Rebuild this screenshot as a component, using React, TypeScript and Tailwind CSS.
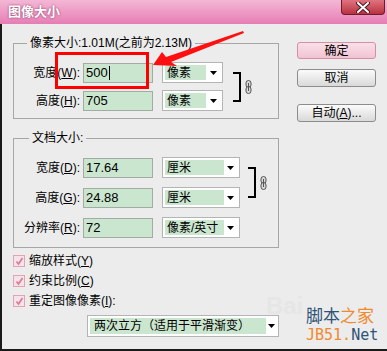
import React from 'react';

const FONT = "font-['Liberation_Sans','Noto_Sans_CJK_SC',sans-serif]";

const Chain: React.FC = () => (
  <svg width="7" height="14" viewBox="0 0 7 14" className="shrink-0">
    <rect x="1" y="0.5" width="5" height="7" rx="2.5" fill="#d8d8d8" stroke="#555" strokeWidth="1" />
    <rect x="1" y="6.5" width="5" height="7" rx="2.5" fill="#d8d8d8" stroke="#555" strokeWidth="1" />
    <line x1="3.5" y1="3" x2="3.5" y2="11" stroke="#555" strokeWidth="1" />
  </svg>
);

const Arrow: React.FC = () => (
  <svg width="7" height="4" viewBox="0 0 7 4">
    <polygon points="0,0 7,0 3.5,4" fill="#000" />
  </svg>
);

const Field: React.FC<{ value: string; caret?: boolean }> = ({ value, caret }) => (
  <div className="w-[70px] h-[20px] border border-[#a3aba5] bg-[#cbe6cf] flex items-center pl-[2px] text-[13px] leading-none">
    {value}
    {caret && <span className="w-px h-[14px] bg-black ml-px" />}
  </div>
);

const Select: React.FC<{ text: string; w: string; green: string }> = ({ text, w, green }) => (
  <div className={`${w} h-[21px] border border-[#b4b4b4] bg-white flex p-[2px]`}>
    <div className={`${green} bg-[#cbe6cf] flex items-center pl-[2px] text-[12px] leading-none whitespace-nowrap`}>{text}</div>
    <div className="flex-1 flex items-center justify-center">
      <Arrow />
    </div>
  </div>
);

const Label: React.FC<{ pre: string; key2: string; post?: string }> = ({ pre, key2, post = '):' }) => (
  <div className="w-[66px] mr-[3px] text-right text-[12px] leading-none whitespace-nowrap">
    {pre}(<span className="underline">{key2}</span>{post}
  </div>
);

const Row: React.FC<{ label: React.ReactNode; value: string; caret?: boolean; sel: React.ReactNode }> = ({ label, value, caret, sel }) => (
  <div className="flex items-center h-[21px]">
    {label}
    <Field value={value} caret={caret} />
    <div className="ml-[9px]">{sel}</div>
  </div>
);

const Bracket: React.FC<{ h: string }> = ({ h }) => (
  <div className={`w-[8px] ${h} border-t-2 border-r-2 border-b-2 border-black`} />
);

const Check: React.FC<{ children: React.ReactNode }> = ({ children }) => (
  <div className="flex items-center h-[20px]">
    <div className="w-[12px] h-[12px] border border-[#e3a3b4] bg-[#f5e3e9] flex items-center justify-center">
      <svg width="9" height="9" viewBox="0 0 9 9">
        <polyline points="1.5,4.5 3.5,7 7.5,1" fill="none" stroke="#d97f98" strokeWidth="1.8" />
      </svg>
    </div>
    <div className="ml-[4px] text-[12px] leading-none">{children}</div>
  </div>
);

const Btn: React.FC<{ primary?: boolean; h: string; children: React.ReactNode }> = ({ primary, h, children }) => (
  <div
    className={`w-[79px] ${h} rounded-[3px] border flex items-center justify-center text-[12px] leading-none ${
      primary
        ? 'border-[#d98da2] bg-gradient-to-b from-[#f9e0e8] to-[#f1c4d2]'
        : 'border-[#8c8c8c] bg-gradient-to-b from-[#fbfbfb] to-[#d9d9d9]'
    }`}
  >
    {children}
  </div>
);

export default function App() {
  return (
    <div className={`relative w-[387px] h-[351px] overflow-hidden bg-[#ececec] text-black ${FONT}`}>
      {/* title bar */}
      <div className="h-[24px] flex items-start bg-gradient-to-b from-[#f3b7d5] to-[#e67db5]">
        <div className="pl-[8px] pt-[5px] text-[13px] font-bold text-white leading-none [text-shadow:0_0_2px_#7a2a55]">
          图像大小
        </div>
        <div className="ml-auto mr-[2px] w-[44px] h-[15px] rounded-b-[4px] border border-t-0 border-[#6e1c28] bg-gradient-to-b from-[#e07280] to-[#b8303f] flex items-center justify-center">
          <svg width="14" height="11" viewBox="0 0 14 11">
            <path d="M2 1 L12 10 M12 1 L2 10" stroke="#4a1a24" strokeWidth="4" strokeLinecap="round" />
            <path d="M2 1 L12 10 M12 1 L2 10" stroke="#fff" strokeWidth="2" strokeLinecap="round" />
          </svg>
        </div>
      </div>

      {/* body */}
      <div className="flex h-[327px] border-l-2 border-b-2 border-[#1a1a1a]">
        <div className="pl-[11px] pt-[12px] w-[279px]">
          <fieldset className="w-[266px] border border-[#a6a6a6] pt-[12px] pb-[7px]">
            <legend className="ml-[13px] px-[3px] text-[12px] leading-[14px]">像素大小:1.01M(之前为2.13M)</legend>
            <div className="flex items-center">
              <div className="flex flex-col gap-[7px]">
                <Row
                  label={<Label pre="宽度" key2="W" />}
                  value="500"
                  caret
                  sel={<Select text="像素" w="w-[61px]" green="w-[41px]" />}
                />
                <Row
                  label={<Label pre="高度" key2="H" />}
                  value="705"
                  sel={<Select text="像素" w="w-[61px]" green="w-[41px]" />}
                />
              </div>
              <div className="ml-[10px]">
                <Bracket h="h-[30px]" />
              </div>
              <div className="ml-[4px]">
                <Chain />
              </div>
            </div>
          </fieldset>

          <fieldset className="mt-[12px] w-[266px] border border-[#a6a6a6] pt-[12px] pb-[9px]">
            <legend className="ml-[15px] px-[3px] text-[12px] leading-[14px]">文档大小:</legend>
            <div className="flex flex-col gap-[9px]">
              <div className="flex items-center">
                <div className="flex flex-col gap-[9px]">
                  <Row
                    label={<Label pre="宽度" key2="D" />}
                    value="17.64"
                    sel={<Select text="厘米" w="w-[78px]" green="w-[59px]" />}
                  />
                  <Row
                    label={<Label pre="高度" key2="G" />}
                    value="24.88"
                    sel={<Select text="厘米" w="w-[78px]" green="w-[59px]" />}
                  />
                </div>
                <div className="ml-[8px]">
                  <Bracket h="h-[31px]" />
                </div>
                <div className="ml-[4px]">
                  <Chain />
                </div>
              </div>
              <Row
                label={<Label pre="分辨率" key2="R" />}
                value="72"
                sel={<Select text="像素/英寸" w="w-[78px]" green="w-[59px]" />}
              />
            </div>
          </fieldset>

          <div className="mt-[3px]">
            <Check>
              缩放样式(<span className="underline">Y</span>)
            </Check>
            <Check>
              约束比例(<span className="underline">C</span>)
            </Check>
            <Check>
              重定图像像素(<span className="underline">I</span>):
            </Check>
          </div>

          <div className="ml-[74px] mt-[4px] w-[192px] h-[22px] border border-[#b4b4b4] bg-white flex p-[2px]">
            <div className="w-[176px] bg-[#cbe6cf] flex items-center pl-[4px] text-[12px] leading-none whitespace-nowrap">
              两次立方（适用于平滑渐变）
            </div>
            <div className="flex-1 flex items-center justify-center">
              <Arrow />
            </div>
          </div>
        </div>

        <div className="ml-[16px] pt-[18px] flex flex-col">
          <Btn primary h="h-[17px]">确定</Btn>
          <div className="mt-[10px]">
            <Btn h="h-[18px]">取消</Btn>
          </div>
          <div className="mt-[17px]">
            <Btn h="h-[18px]">
              自动(<span className="underline">A</span>)...
            </Btn>
          </div>
        </div>
      </div>

      {/* annotation overlay */}
      <svg className="absolute left-0 top-0 pointer-events-none" width="387" height="351">
        <rect x="56.5" y="53.5" width="91" height="34" fill="none" stroke="#ff0000" strokeWidth="3" />
        <polygon points="153,65 162,52 166,57 243,31 244,33 171,62 177,66" fill="#ff1010" />
      </svg>

      {/* watermark */}
      <div className="absolute left-[266px] top-[294px] text-[24px] font-bold text-[#e6e6e6] leading-none pointer-events-none">
        Bai
      </div>
      <div className="absolute left-[306px] top-[305px] w-[76px] flex flex-col items-start pointer-events-none">
        <div className="text-[17px] leading-[20px] whitespace-nowrap font-['Noto_Sans_CJK_SC',sans-serif]">
          <span className="text-[#2f5378]">脚本</span>
          <span className="text-[#f08a2c]">之家</span>
        </div>
        <div className="mt-[2px] text-[15px] leading-[16px] whitespace-nowrap font-['DejaVu_Sans_Mono',monospace]">
          <span className="text-[#f08a2c]">JB51.</span>
          <span className="text-[#2f5378]">Net</span>
        </div>
      </div>
    </div>
  );
}
